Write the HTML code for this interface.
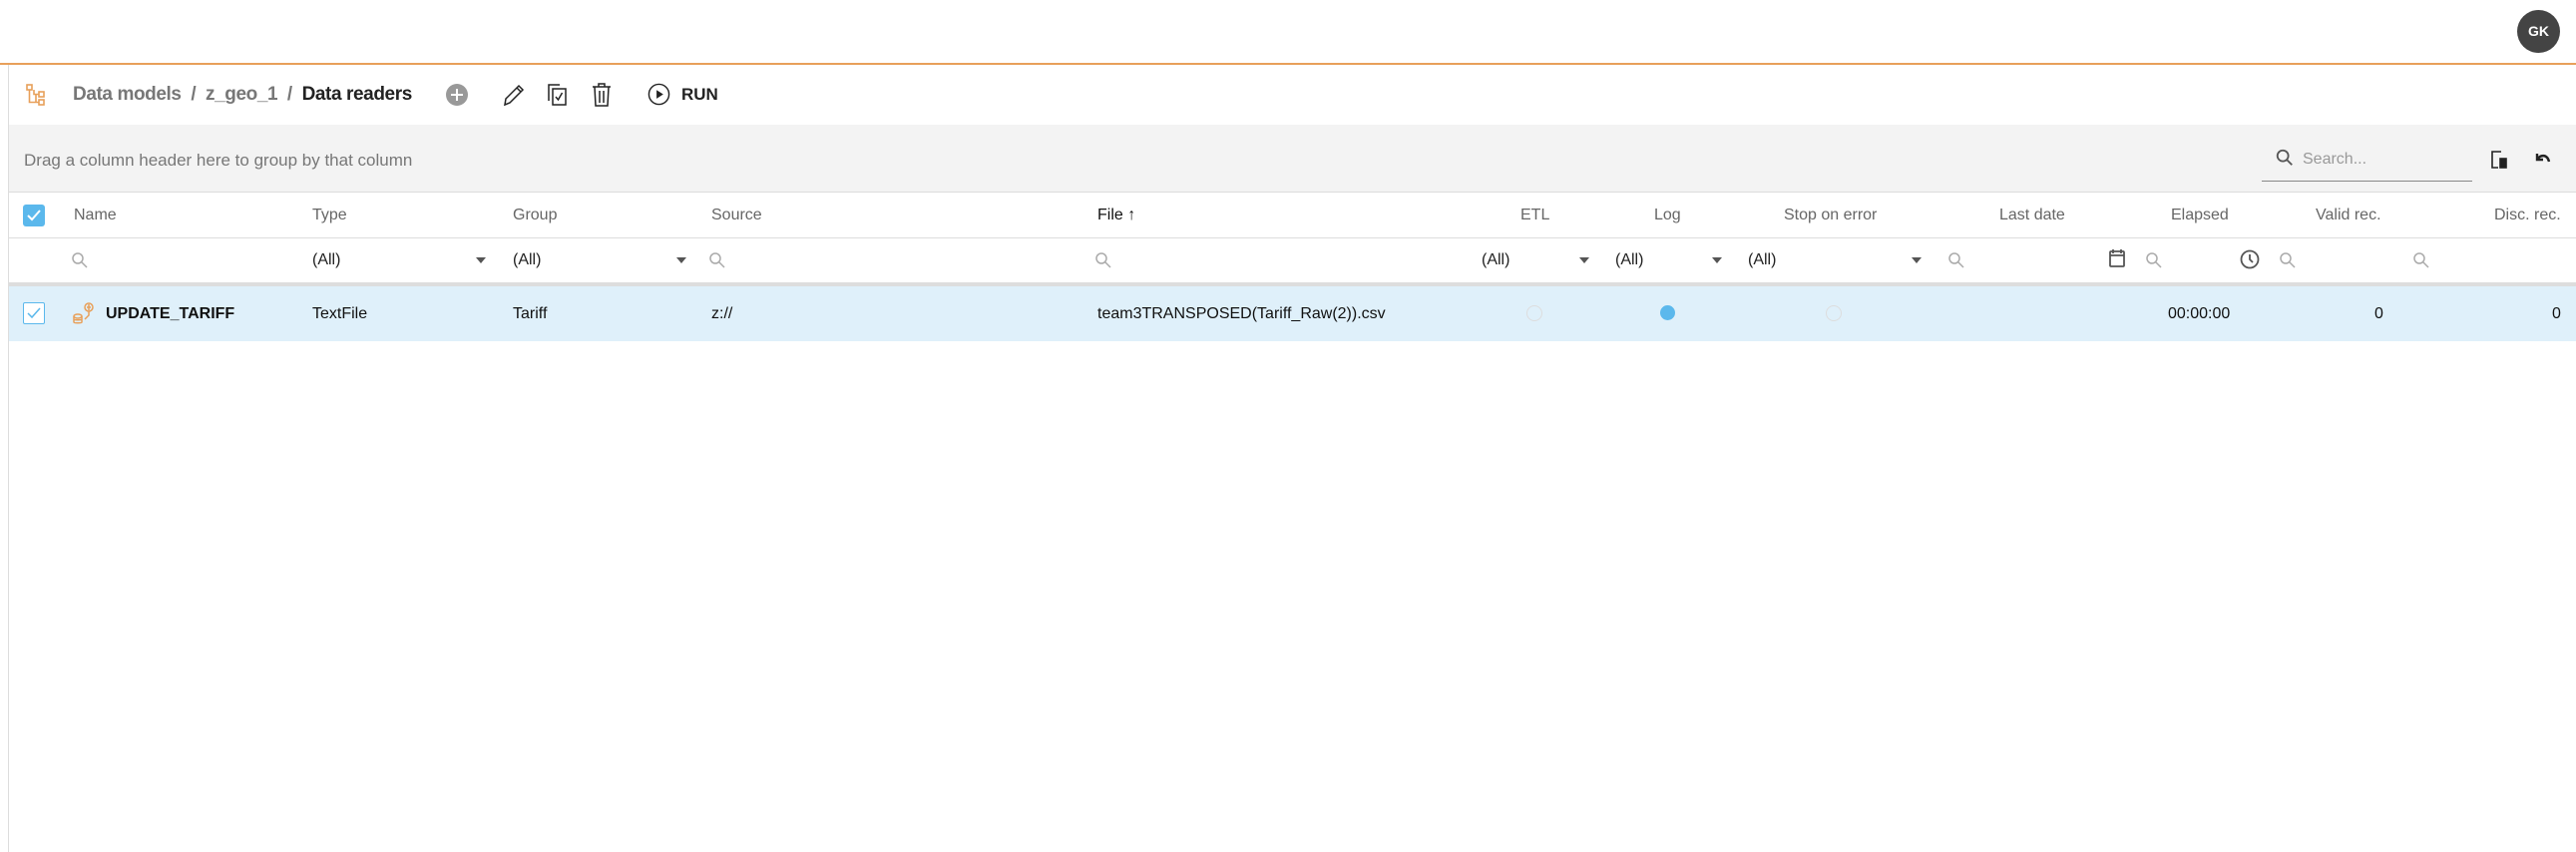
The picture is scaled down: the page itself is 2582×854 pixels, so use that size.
<!DOCTYPE html>
<html><head><meta charset="utf-8"><style>
body{margin:0;width:2582px;height:854px;background:#fff;font-family:"Liberation Sans",sans-serif;position:relative;overflow:hidden}
.a{position:absolute;white-space:nowrap}
.h{color:#666;font-size:16px;top:207px}
.f{color:#222;font-size:16px;top:252px}
.r{color:#111;font-size:16px;top:306px}
.mag{position:absolute;width:18px;height:18px}
</style></head><body>
<div class="a" style="left:2523px;top:10px;width:43px;height:43px;border-radius:50%;background:#444;color:#fff;font-size:14px;font-weight:bold;text-align:center;line-height:43px">GK</div>
<div class="a" style="left:0;top:63px;width:2582px;height:2px;background:#e8a05a"></div>
<div class="a" style="left:8px;top:65px;width:1px;height:789px;background:#ddd"></div>

<svg class="a" style="left:24px;top:82px" width="26" height="26" viewBox="0 0 26 26" fill="none" stroke="#e8a05a" stroke-width="1.6"><rect x="3" y="3" width="5" height="5"/><rect x="15" y="10" width="5" height="5"/><rect x="15" y="18" width="5" height="5"/><path d="M5.5 8v12.5h9.5M10 8v4.5h5M12 12v8"/></svg>
<div class="a" style="left:73px;top:84px;font-size:19px;font-weight:bold;color:#777;letter-spacing:-0.4px">Data models&nbsp; / &nbsp;z_geo_1&nbsp; / &nbsp;<span style="color:#222">Data readers</span></div>
<svg class="a" style="left:447px;top:84px" width="22" height="22" viewBox="0 0 22 22"><circle cx="11" cy="11" r="11" fill="#999"/><path d="M11 5v12M5 11h12" stroke="#fff" stroke-width="2"/></svg>
<svg class="a" style="left:502px;top:82px" width="26" height="26" viewBox="0 0 26 26" fill="none" stroke="#222" stroke-width="1.5"><path d="M4 23l1-6L18 4l4 4L9 21z M16 6l4 4"/></svg>
<svg class="a" style="left:547px;top:82px" width="24" height="26" viewBox="0 0 24 26" fill="none" stroke="#222" stroke-width="1.5"><path d="M3 19V3h11"/><rect x="7" y="7" width="13" height="16"/><path d="M10 15l2.5 3 4-7"/></svg>
<svg class="a" style="left:592px;top:82px" width="22" height="26" viewBox="0 0 22 26" fill="none" stroke="#222" stroke-width="1.5"><path d="M2 5h18M8 5V2h6v3M4 5l1 19h12l1-19M9 9v12M13 9v12"/></svg>
<svg class="a" style="left:649px;top:83px" width="23" height="23" viewBox="0 0 24 24"><circle cx="12" cy="12" r="10.5" fill="none" stroke="#222" stroke-width="1.5"/><path d="M9.5 7.5v9l7-4.5z" fill="#222"/></svg>
<div class="a" style="left:683px;top:85px;font-size:17px;font-weight:bold;color:#222">RUN</div>

<div class="a" style="left:9px;top:125px;width:2573px;height:67px;background:#f3f3f3;border-bottom:1px solid #ddd"></div>
<div class="a" style="left:24px;top:151px;font-size:17px;color:#777">Drag a column header here to group by that column</div>
<svg class="a" style="left:2280px;top:148px" width="20" height="20" viewBox="0 0 22 22" fill="none" stroke="#555" stroke-width="2"><circle cx="9" cy="9" r="6"/><path d="M13.5 13.5L19 19"/></svg>
<div class="a" style="left:2308px;top:151px;font-size:16px;color:#999">Search...</div>
<div class="a" style="left:2267px;top:181px;width:211px;height:1px;background:#888"></div>
<svg class="a" style="left:2495px;top:150px" width="20" height="20" viewBox="0 0 20 20" fill="none" stroke="#222" stroke-width="1.6"><path d="M12 2H3v16h6"/><rect x="11" y="9" width="6" height="9" fill="#222"/></svg>
<svg class="a" style="left:2540px;top:151px" width="18" height="16" viewBox="0 0 18 16" fill="none" stroke="#222" stroke-width="2.4"><path d="M3 3v6h6M3 9C6 4 13 3 15 11"/></svg>

<div class="a" style="left:9px;top:238px;width:2573px;height:1px;background:#ddd"></div>
<div class="a" style="left:23px;top:205px;width:22px;height:22px;border-radius:3px;background:#5bb8ec"></div>
<svg class="a" style="left:23px;top:205px" width="22" height="22"><path d="M5 11l4 4 8-9" fill="none" stroke="#fff" stroke-width="2"/></svg>
<div class="a h" style="left:74px">Name</div>
<div class="a h" style="left:313px">Type</div>
<div class="a h" style="left:514px">Group</div>
<div class="a h" style="left:713px">Source</div>
<div class="a h" style="left:1100px;color:#111">File &#8593;</div>
<div class="a h" style="left:1524px">ETL</div>
<div class="a h" style="left:1658px">Log</div>
<div class="a h" style="left:1788px">Stop on error</div>
<div class="a h" style="left:2004px">Last date</div>
<div class="a h" style="left:2176px">Elapsed</div>
<div class="a h" style="left:2321px">Valid rec.</div>
<div class="a h" style="left:2500px">Disc. rec.</div>

<svg width="0" height="0" style="position:absolute"><defs><symbol id="m" viewBox="0 0 18 18"><circle cx="7" cy="7" r="5" fill="none" stroke="#aaa" stroke-width="1.5"/><path d="M10.5 10.5L16 16" stroke="#aaa" stroke-width="1.5"/></symbol><symbol id="d" viewBox="0 0 10 6"><path d="M0 0h10L5 6z" fill="#555"/></symbol></defs></svg>
<svg class="mag" style="left:71px;top:252px"><use href="#m"/></svg>
<svg class="mag" style="left:710px;top:252px"><use href="#m"/></svg>
<svg class="mag" style="left:1097px;top:252px"><use href="#m"/></svg>
<svg class="mag" style="left:1952px;top:252px"><use href="#m"/></svg>
<svg class="mag" style="left:2150px;top:252px"><use href="#m"/></svg>
<svg class="mag" style="left:2284px;top:252px"><use href="#m"/></svg>
<svg class="mag" style="left:2418px;top:252px"><use href="#m"/></svg>
<div class="a f" style="left:313px">(All)</div><svg class="a" style="left:477px;top:258px" width="10" height="6"><use href="#d"/></svg>
<div class="a f" style="left:514px">(All)</div><svg class="a" style="left:678px;top:258px" width="10" height="6"><use href="#d"/></svg>
<div class="a f" style="left:1485px">(All)</div><svg class="a" style="left:1583px;top:258px" width="10" height="6"><use href="#d"/></svg>
<div class="a f" style="left:1619px">(All)</div><svg class="a" style="left:1716px;top:258px" width="10" height="6"><use href="#d"/></svg>
<div class="a f" style="left:1752px">(All)</div><svg class="a" style="left:1916px;top:258px" width="10" height="6"><use href="#d"/></svg>
<svg class="a" style="left:2113px;top:249px" width="18" height="20" viewBox="0 0 18 20" fill="none" stroke="#555" stroke-width="1.8"><rect x="2" y="3" width="14" height="15" rx="1"/><path d="M2 7h14M5 1v4M13 1v4"/></svg>
<svg class="a" style="left:2245px;top:250px" width="20" height="20" viewBox="0 0 20 20" fill="none" stroke="#555" stroke-width="1.8"><circle cx="10" cy="10" r="8.5"/><path d="M10 5v5l3 3"/></svg>

<div class="a" style="left:9px;top:283px;width:2573px;height:4px;background:#ddd"></div>
<div class="a" style="left:9px;top:287px;width:2573px;height:55px;background:#dff0fa"></div>
<div class="a" style="left:23px;top:303px;width:20px;height:20px;border:1px solid #5bb8ec;border-radius:2px;background:#fff"></div>
<svg class="a" style="left:23px;top:303px" width="22" height="22"><path d="M5 11l4 4 8-9" fill="none" stroke="#5bb8ec" stroke-width="1.5"/></svg>
<svg class="a" style="left:72px;top:302px" width="24" height="24" viewBox="0 0 24 24" fill="none" stroke="#e8a05a" stroke-width="1.5"><ellipse cx="6" cy="15" rx="4" ry="2"/><path d="M2 15v6c0 1 8 1 8 0v-6M2 18c0 1 8 1 8 0"/><circle cx="17" cy="6" r="4"/><path d="M17 3v6M15 6h4M17 10v4l-4 4"/></svg>
<div class="a r" style="left:106px;font-weight:bold">UPDATE_TARIFF</div>
<div class="a r" style="left:313px">TextFile</div>
<div class="a r" style="left:514px">Tariff</div>
<div class="a r" style="left:713px">z://</div>
<div class="a r" style="left:1100px">team3TRANSPOSED(Tariff_Raw(2)).csv</div>
<div class="a" style="left:1530px;top:306px;width:14px;height:14px;border:1px solid #ddd;border-radius:50%"></div>
<div class="a" style="left:1664px;top:306px;width:15px;height:15px;border-radius:50%;background:#5bb8ec"></div>
<div class="a" style="left:1830px;top:306px;width:14px;height:14px;border:1px solid #ddd;border-radius:50%"></div>
<div class="a r" style="left:2173px">00:00:00</div>
<div class="a r" style="left:2380px">0</div>
<div class="a r" style="left:2558px">0</div>
</body></html>
